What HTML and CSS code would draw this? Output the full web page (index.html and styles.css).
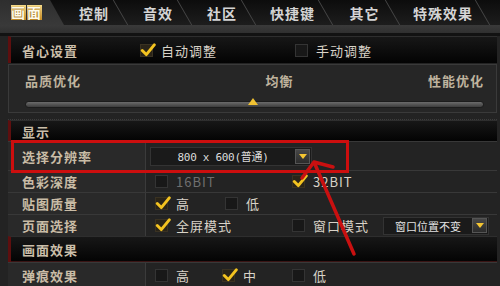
FILE: index.html
```html
<!DOCTYPE html>
<html lang="zh-CN">
<head>
<meta charset="utf-8">
<title>画面设置</title>
<link rel="stylesheet" href="styles.css">
</head>
<body>
<div class="tabs">
  <div class="tab tab-active w64"><span class="gold">画</span><span class="gold">面</span></div>
  <div class="tab w64">控制</div>
  <div class="tab w64">音效</div>
  <div class="tab w64">社区</div>
  <div class="tab w77">快捷键</div>
  <div class="tab w67">其它</div>
  <div class="tab w90">特殊效果</div>
</div>
<div class="strip"></div>

<div class="content">
  <div class="hrow hrow-top">
    <span class="hlabel">省心设置</span>
    <span class="opt opt-auto"><span class="check on"><svg viewBox="0 0 14 14"><path d="M2 7.5 L5.5 11 L12.5 2.5"/></svg></span><span class="otext">自动调整</span></span>
    <span class="opt"><span class="check"></span><span class="otext">手动调整</span></span>
  </div>

  <div class="slider">
    <div class="slabels"><span>品质优化</span><span class="mid">均衡</span><span>性能优化</span></div>
    <div class="track"><span class="marker"></span></div>
  </div>
  <div class="dots"></div>

  <div class="hrow hrow-sec"><span class="hlabel">显示</span></div>

  <div class="row row-res">
    <div class="lab">选择分辨率</div>
    <div class="val">
      <div class="drop drop-res"><span class="dtext">800 x 600(普通)</span><span class="dbtn"></span></div>
    </div>
  </div>
  <div class="row">
    <div class="lab">色彩深度</div>
    <div class="val">
      <span class="opt w137"><span class="check"></span><span class="otext dim">16BIT</span></span>
      <span class="opt"><span class="check on"><svg viewBox="0 0 14 14"><path d="M2 7.5 L5.5 11 L12.5 2.5"/></svg></span><span class="otext">32BIT</span></span>
    </div>
  </div>
  <div class="row">
    <div class="lab">贴图质量</div>
    <div class="val">
      <span class="opt w70"><span class="check on"><svg viewBox="0 0 14 14"><path d="M2 7.5 L5.5 11 L12.5 2.5"/></svg></span><span class="otext">高</span></span>
      <span class="opt"><span class="check"></span><span class="otext">低</span></span>
    </div>
  </div>
  <div class="row">
    <div class="lab">页面选择</div>
    <div class="val">
      <span class="opt w137"><span class="check on"><svg viewBox="0 0 14 14"><path d="M2 7.5 L5.5 11 L12.5 2.5"/></svg></span><span class="otext">全屏模式</span></span>
      <span class="opt w91"><span class="check"></span><span class="otext">窗口模式</span></span>
      <div class="drop drop-win"><span class="dtext">窗口位置不变</span><span class="dbtn"></span></div>
    </div>
  </div>

  <div class="hrow hrow-sec hrow-fx"><span class="hlabel">画面效果</span></div>

  <div class="row row-last">
    <div class="lab">弹痕效果</div>
    <div class="val">
      <span class="opt w67"><span class="check"></span><span class="otext">高</span></span>
      <span class="opt w70"><span class="check on"><svg viewBox="0 0 14 14"><path d="M2 7.5 L5.5 11 L12.5 2.5"/></svg></span><span class="otext">中</span></span>
      <span class="opt"><span class="check"></span><span class="otext">低</span></span>
    </div>
  </div>
</div>

<div class="redbox"></div>
<svg class="arrow" viewBox="0 0 500 286" width="500" height="286">
  <path d="M354 254 L314 162 M314 162 L302 178 M314 162 L333 167"/>
</svg>
</body>
</html>
```

FILE: styles.css
```css
* { box-sizing: border-box; }
html, body { margin: 0; padding: 0; }
body {
  width: 500px;
  height: 286px;
  overflow: hidden;
  position: relative;
  background: #232323;
  font-family: "Noto Sans CJK SC", "Noto Sans", sans-serif;
  color: #cfc6b6;
}

/* tabs */
.tabs {
  height: 25px;
  display: flex;
  background: linear-gradient(#0c0c0c, #1d1d1d);
}
.tab {
  position: relative;
  display: flex;
  align-items: center;
  justify-content: center;
  font-size: 14px;
  font-weight: 700;
  letter-spacing: 1px;
  color: #d4d4d4;
  padding-right: 4px;
}
.tab::after {
  content: "";
  position: absolute;
  right: 7px;
  top: 0;
  height: 100%;
  width: 1px;
  background: #474747;
  transform: skewX(30deg);
}
.tab-active {
  background: linear-gradient(#2e2e2e, #393939);
  clip-path: polygon(0 0, calc(100% - 14px) 0, 100% 100%, 0 100%);
  padding-right: 10px;
}
.tab-active::after { display: none; }
.gold {
  display: inline-block;
  background: linear-gradient(#f6dc8c, #c48d27);
  color: #fffbea;
  line-height: 14px;
  padding: 0 0 1px;
  margin-right: 1px;
  text-shadow: 0 0 1px #7a4a00;
}
.w64 { width: 64px; }
.w77 { width: 77px; }
.w67 { width: 67px; }
.w90 { width: 90px; }

.strip {
  height: 11px;
  background: linear-gradient(#3a3a3a 0, #303030 8px, #121212 8px, #121212 100%);
}

.content {
  padding: 0 3px 0 8px;
}

/* header rows */
.hrow {
  display: flex;
  align-items: center;
  background: linear-gradient(#171717, #030303);
  border-left: 3px solid #5e0f0f;
  border-top: 1px solid #2e2e2e;
}
.hlabel {
  font-size: 13px;
  font-weight: 700;
  letter-spacing: 1px;
  color: #cbbfaa;
  padding-left: 11px;
}
.hrow-top { height: 27px; }
.hrow-top .hlabel { width: 129px; }
.opt-auto { width: 155px; }
.hrow-sec { height: 21px; }
.hrow-fx {
  height: 26px;
  box-shadow: inset 0 -1px 0 #3a1414;
}

/* options */
.opt {
  display: inline-flex;
  align-items: center;
  flex: none;
}
.w137 { width: 137px; }
.w70 { width: 70px; }
.w67 { width: 67px; }
.w91 { width: 91px; }
.check {
  position: relative;
  width: 13px;
  height: 13px;
  background: #181818;
  border: 1px solid #343434;
  flex: none;
}
.check svg {
  position: absolute;
  left: -1px;
  top: -3px;
  width: 16px;
  height: 16px;
  fill: none;
  stroke: #f3c320;
  stroke-width: 2.6;
  stroke-linecap: round;
  stroke-linejoin: round;
}
.check.on { background: #2a2418; border-color: #3a3222; }
.otext {
  margin-left: 8px;
  font-size: 13px;
  color: #d9d3c8;
  letter-spacing: 1px;
}
.otext.dim { color: #6f6f6f; }

/* slider */
.slider {
  margin-top: 1px;
  height: 49px;
  border: 1px solid #3a3a3a;
  background: #262626;
  padding: 8px 12px 0 16px;
}
.slabels {
  display: flex;
  justify-content: space-between;
  font-size: 13px;
  font-weight: 700;
  color: #bfb39e;
  letter-spacing: 1px;
  line-height: 16px;
}
.slabels .mid { margin-left: 50px; }
.track {
  position: relative;
  margin-top: 12px;
  height: 7px;
  border-radius: 4px;
  background: linear-gradient(#6b6b6b, #3d3d3d);
  border: 1px solid #1c1c1c;
}
.marker {
  position: absolute;
  left: 222px;
  top: -4px;
  width: 0;
  height: 0;
  border-left: 5px solid transparent;
  border-right: 5px solid transparent;
  border-bottom: 7px solid #f1c232;
}
.dots {
  height: 7px;
  border-bottom: 1px dotted #3c3c3c;
  margin-bottom: 0;
}

/* grid rows */
.row {
  display: grid;
  grid-template-columns: 138px 1fr;
  height: 22px;
  border-top: 1px solid #383838;
}
.row-res { height: 29px; }
.row-last { height: 26px; }
.lab {
  display: flex;
  align-items: center;
  padding-left: 14px;
  background: #292929;
  border-right: 1px solid #3b3b3b;
  font-size: 13px;
  font-weight: 700;
  letter-spacing: 1px;
  color: #c9bca6;
}
.val {
  display: flex;
  align-items: center;
  padding-left: 9px;
  background: #232323;
}

/* dropdowns */
.drop {
  display: flex;
  align-items: center;
  background: #1a1a1a;
  border: 1px solid #333;
  height: 18px;
}
.drop-res {
  margin-left: -5px;
  width: 162px;
  height: 19px;
}
.drop-res .dtext {
  flex: 1;
  text-align: center;
  font-family: "DejaVu Sans Mono", "Noto Sans CJK SC", monospace;
  font-size: 11px;
  color: #dcdcdc;
  letter-spacing: -0.3px;
}
.drop-win {
  margin-left: 0;
  width: 106px;
}
.drop-win .dtext {
  flex: 1;
  text-align: center;
  font-size: 11px;
  color: #e2e2e2;
}
.dbtn {
  position: relative;
  width: 15px;
  height: 15px;
  margin-right: 1px;
  background: linear-gradient(#474747, #2c2c2c);
  border: 1px solid #555;
  flex: none;
}
.dbtn::after {
  content: "";
  position: absolute;
  left: 3px;
  top: 4px;
  border-left: 4px solid transparent;
  border-right: 4px solid transparent;
  border-top: 5px solid #f4c532;
}

/* annotations */
.redbox {
  position: absolute;
  left: 11px;
  top: 140px;
  width: 338px;
  height: 33px;
  border: 3px solid #cc0e0e;
}
.arrow {
  position: absolute;
  left: 0;
  top: 0;
  pointer-events: none;
}
.arrow path {
  fill: none;
  stroke: #c91010;
  stroke-width: 3.5;
  stroke-linecap: round;
}
```
